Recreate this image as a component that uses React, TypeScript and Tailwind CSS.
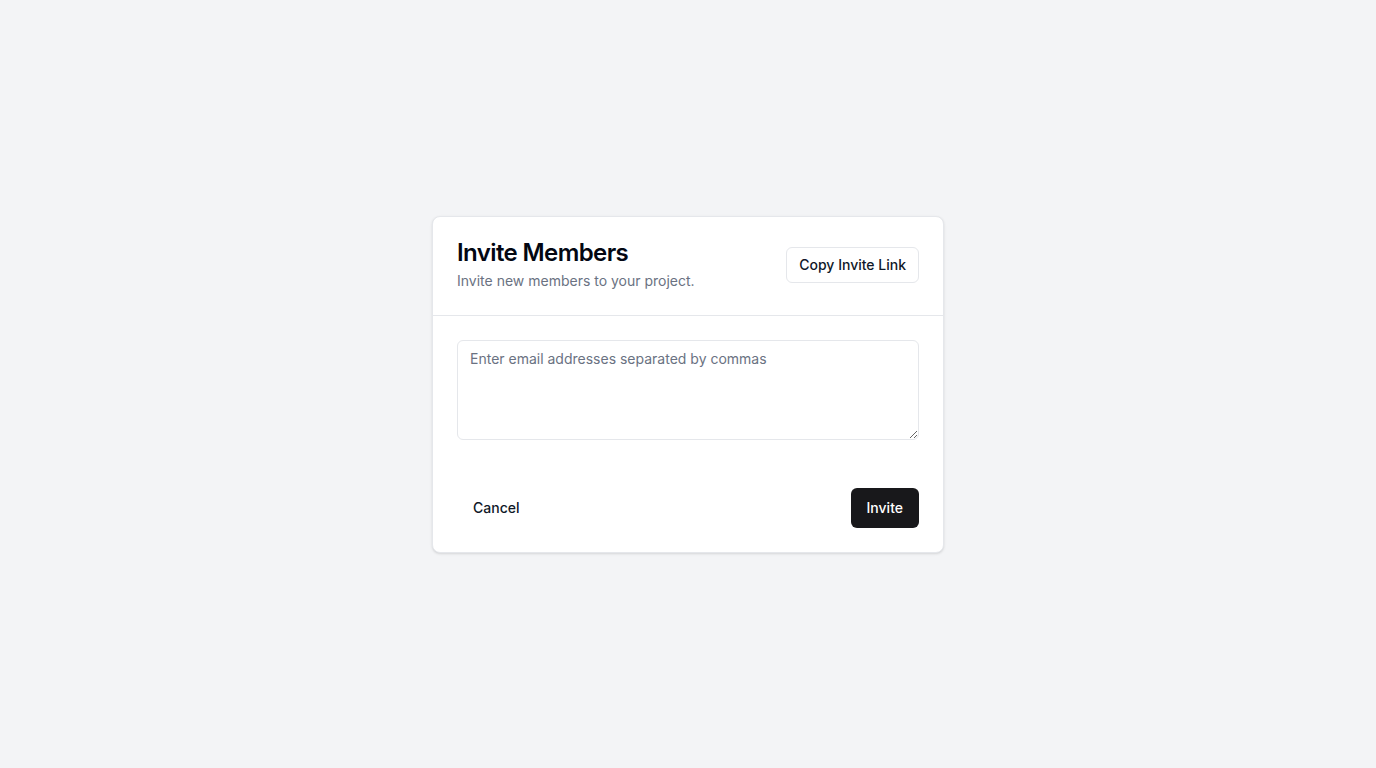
export default function App() {
  return (
    <div
      className="min-h-screen bg-gray-100 flex items-center justify-center"
      style={{ fontFamily: 'Inter, "Noto Sans", sans-serif' }}
    >
      <div className="w-[512px] bg-white border border-gray-200 rounded-lg shadow-sm">
        <div className="flex items-center justify-between p-6 border-b border-gray-200">
          <div>
            <h2 className="text-2xl leading-none font-semibold tracking-tight text-gray-950">
              Invite Members
            </h2>
            <p className="mt-1.5 text-sm text-gray-500">
              Invite new members to your project.
            </p>
          </div>
          <button className="h-9 px-3 -mt-0.5 rounded-md border border-gray-200 bg-white text-sm font-medium text-gray-900">
            Copy Invite Link
          </button>
        </div>
        <div className="p-6">
          <textarea
            className="block w-full h-[100px] rounded-md border border-gray-200 px-3 py-2 text-sm text-gray-900 placeholder:text-gray-500 outline-none"
            placeholder="Enter email addresses separated by commas"
          />
        </div>
        <div className="flex items-center justify-between px-6 pb-6 pt-6">
          <button className="h-10 px-4 rounded-md text-sm font-medium text-gray-900">
            Cancel
          </button>
          <button className="h-10 px-4 rounded-md bg-zinc-900 text-sm font-medium text-white">
            Invite
          </button>
        </div>
      </div>
    </div>
  )
}
